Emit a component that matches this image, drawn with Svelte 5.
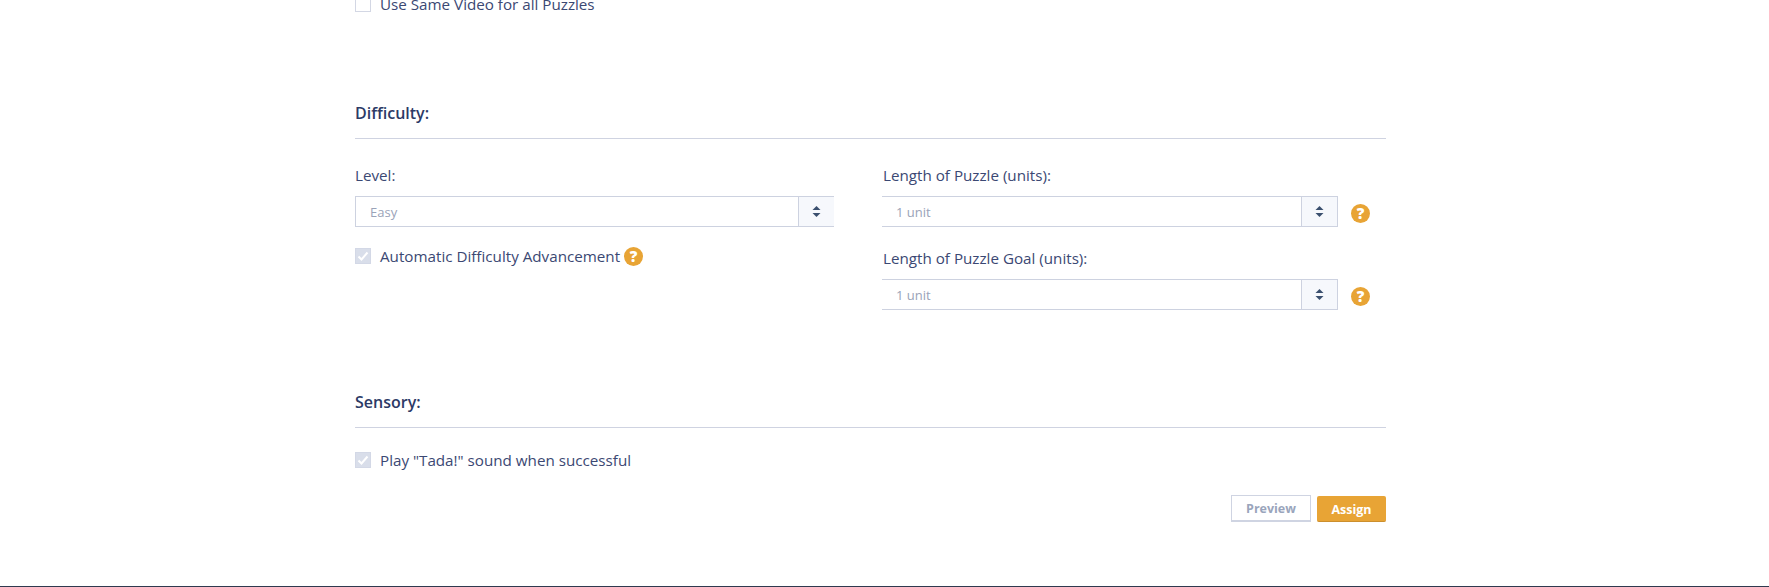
<script>
</script>

{#snippet check(on)}
  <span class="box" class:on>
    {#if on}
      <svg width="14" height="14" viewBox="0 0 14 14"><path d="M2.5 7.5l3 3 6-7" fill="none" stroke="#fff" stroke-width="2"/></svg>
    {/if}
  </span>
{/snippet}

{#snippet q(cls)}
  <span class="help {cls}">?</span>
{/snippet}

{#snippet select(value, cls)}
  <div class="select {cls}">
    <span class="value">{value}</span>
    <span class="arrows">
      <svg width="9" height="11" viewBox="0 0 9 11"><path d="M4.5 0L8.5 4H.5zM4.5 11L.5 7h8z" fill="#3a4f6e"/></svg>
    </span>
  </div>
{/snippet}

<div class="page">
  <main>
    <label class="check top">{@render check(false)}<span>Use Same Video for all Puzzles</span></label>

    <section class="difficulty">
      <h2>Difficulty:</h2>
      <div class="cols">
        <div class="left">
          <div class="label">Level:</div>
          {@render select('Easy', 'open')}
          <label class="check auto">{@render check(true)}<span>Automatic Difficulty Advancement</span>{@render q('inline')}</label>
        </div>
        <div class="right">
          <div class="label indent">Length of Puzzle (units):</div>
          <div class="row">{@render select('1 unit', 'noleft')}{@render q('side')}</div>
          <div class="label indent second">Length of Puzzle Goal (units):</div>
          <div class="row">{@render select('1 unit', 'noleft')}{@render q('side')}</div>
        </div>
      </div>
    </section>

    <section class="sensory">
      <h2>Sensory:</h2>
      <label class="check play">{@render check(true)}<span>Play "Tada!" sound when successful</span></label>
    </section>

    <div class="actions">
      <button class="preview">Preview</button>
      <button class="assign">Assign</button>
    </div>
  </main>
  <div class="foot"></div>
</div>

<style>
  :global(body) { margin: 0; background: #fff; }
  .page {
    height: 587px;
    overflow: hidden;
    display: flex;
    flex-direction: column;
    font-family: "Open Sans", sans-serif;
    font-size: 15.2px;
    color: #3b4873;
  }
  main {
    flex: 1;
    width: 1031px;
    margin-left: 355px;
    margin-top: -5px;
  }
  .foot { height: 1px; background: #2f3a4f; }
  .check { display: flex; align-items: center; height: 17px; }
  .box {
    width: 16px; height: 16px; box-sizing: border-box;
    border: 1px solid #d3d7e4; background: #fff;
    margin-right: 9px; flex: none;
    display: flex; align-items: center; justify-content: center;
  }
  .box.on { background: #d9deea; border-color: #d3d8e6; }
  h2 {
    margin: 0;
    font-size: 16px;
    font-weight: 600;
    line-height: 20px;
    color: #2c3a66;
    padding-bottom: 15px;
    border-bottom: 1px solid #cfd3e1;
  }
  .difficulty { margin-top: 91px; }
  .cols { display: flex; margin-top: 26px; }
  .left { width: 479px; margin-right: 48px; }
  .right { flex: 1; }
  .label { line-height: 20px; margin-bottom: 11px; }
  .label.indent { padding-left: 1px; }
  .label.second { margin-top: 21px; margin-bottom: 11px; }
  .row { display: flex; align-items: center; }
  .select {
    display: flex;
    box-sizing: border-box;
    height: 31px;
    border: 1px solid #cdd2e0;
    background: #fff;
    font-size: 13px;
    color: #9aa3b8;
  }
  .select.open { border-right: 0; width: 479px; }
  .select.noleft { border-left: 0; width: 456px; flex: none; }
  .value { flex: 1; padding-left: 14px; line-height: 31px; }
  .arrows {
    width: 35px; flex: none;
    background: #f6f8fc;
    border-left: 1px solid #cdd2e0;
    display: flex; align-items: center; justify-content: center;
  }
  .help {
    width: 19px; height: 19px; border-radius: 50%;
    background: #e8a435; color: #fff;
    font-size: 15px; font-weight: 800; line-height: 19px; text-align: center;
    flex: none; display: block;
  }
  .side { margin-left: 13px; margin-top: 4px; }
  .inline { margin-left: 4px; margin-top: 1px; }
  .auto { margin-top: 20px; }
  .sensory { margin-top: 82px; }
  .play { margin-top: 23px; }
  .actions { display: flex; justify-content: flex-end; align-items: flex-end; gap: 6px; margin-top: 27px; }
  button {
    font-family: inherit;
    font-size: 12.5px;
    font-weight: 700;
    padding: 1px 0 0;
    height: 27px;
    box-sizing: border-box;
  }
  .preview { width: 80px; background: #fff; color: #9aa5bc; border: 1px solid #cfd4e2; border-bottom-width: 2px; }
  .assign { width: 69px; height: 26px; background: #e8a435; color: #fff; border: 0; border-bottom: 1px solid #cc8f2d; border-radius: 2px; }
</style>
